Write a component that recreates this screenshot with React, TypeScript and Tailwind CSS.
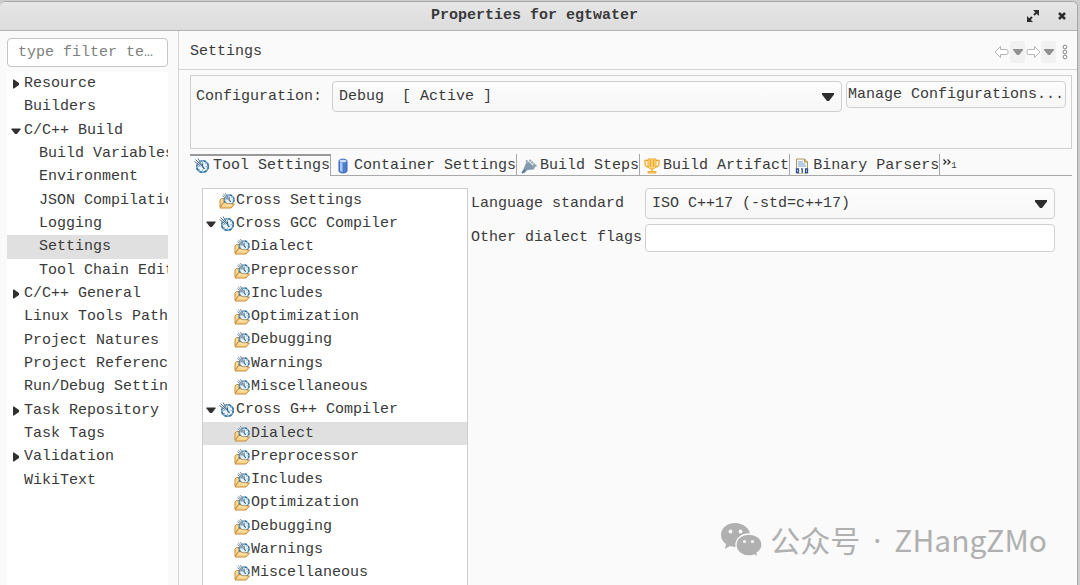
import type { ReactNode } from 'react';

type PageItem = {
  label: string;
  child?: boolean;
  arrow?: 'open' | 'closed';
  selected?: boolean;
};

type ToolItem = {
  label: string;
  kind: 'root' | 'tool' | 'option';
  selected?: boolean;
};

const pages: PageItem[] = [
  { label: 'Resource', arrow: 'closed' },
  { label: 'Builders' },
  { label: 'C/C++ Build', arrow: 'open' },
  { label: 'Build Variables', child: true },
  { label: 'Environment', child: true },
  { label: 'JSON Compilation', child: true },
  { label: 'Logging', child: true },
  { label: 'Settings', child: true, selected: true },
  { label: 'Tool Chain Editor', child: true },
  { label: 'C/C++ General', arrow: 'closed' },
  { label: 'Linux Tools Path' },
  { label: 'Project Natures' },
  { label: 'Project References' },
  { label: 'Run/Debug Settings' },
  { label: 'Task Repository', arrow: 'closed' },
  { label: 'Task Tags' },
  { label: 'Validation', arrow: 'closed' },
  { label: 'WikiText' },
];

const tools: ToolItem[] = [
  { label: 'Cross Settings', kind: 'root' },
  { label: 'Cross GCC Compiler', kind: 'tool' },
  { label: 'Dialect', kind: 'option' },
  { label: 'Preprocessor', kind: 'option' },
  { label: 'Includes', kind: 'option' },
  { label: 'Optimization', kind: 'option' },
  { label: 'Debugging', kind: 'option' },
  { label: 'Warnings', kind: 'option' },
  { label: 'Miscellaneous', kind: 'option' },
  { label: 'Cross G++ Compiler', kind: 'tool' },
  { label: 'Dialect', kind: 'option', selected: true },
  { label: 'Preprocessor', kind: 'option' },
  { label: 'Includes', kind: 'option' },
  { label: 'Optimization', kind: 'option' },
  { label: 'Debugging', kind: 'option' },
  { label: 'Warnings', kind: 'option' },
  { label: 'Miscellaneous', kind: 'option' },
];

function Triangle({ open }: { open: boolean }) {
  return (
    <svg className="h-[10px] w-[10px]" viewBox="0 0 10 10" fill="#303030">
      <path d={open ? 'M.5 2.5h9v1L6 8H4L.5 3.5z' : 'M2 .5h1L8 4v2L3 9.500H2z'} />
    </svg>
  );
}

function Gauge() {
  return (
    <g>
      <circle cx="8.500" cy="8.500" r="5.800" fill="#eef5fa" stroke="#6f9fc0" strokeWidth="1.600" />
      <circle cx="8.500" cy="8.500" r="5.800" fill="none" stroke="#35739f" strokeWidth="1.600" strokeDasharray="2.500 2.100" />
      <path d="M8.500 3.500v2M13.500 8.500h-2M8.500 13.500v-2M3.500 8.500h2M12 5l-1 1M5 12l1-1" stroke="#8db6d2" />
      <path d="M8.500 8.500l2 2.500M8.500 9V5.500" stroke="#2f6c98" strokeWidth="1.300" />
      <path d="M0 0h4l3 3-4 4-3-3z" fill="#fff" fillOpacity=".7" />
      <path d="M.5 3.500l6 4.500M1.500 1.500L8 8M4 .5l3.500 6" stroke="#526f86" />
    </g>
  );
}

function GaugeIcon() {
  return (
    <svg className="h-4 w-4 shrink-0" viewBox="0 0 16 16" fill="none">
      <Gauge />
    </svg>
  );
}

function FolderIcon() {
  return (
    <svg className="h-4 w-4 shrink-0" viewBox="0 0 16 16" fill="none">
      <path d="M1 14V7l1.500-1.500H5V9l-3.500 5z" fill="#f8dc94" stroke="#c78a3c" />
      <g transform="translate(3 -.3) scale(.84)">
        <Gauge />
      </g>
      <path d="M1 15l3-5h3.500l1 1h7L12 15z" fill="#fbd488" stroke="#c78a3c" strokeLinejoin="round" />
      <path d="M4.500 11h2.500l1 1h5" stroke="#fff0c4" />
    </svg>
  );
}

function ContainerIcon() {
  return (
    <svg className="h-4 w-4 shrink-0" viewBox="0 0 16 16">
      <path d="M4 3c0-2.500 8-2.500 8 0v10c0 2.500-8 2.500-8 0z" fill="#4d7fd0" stroke="#3563b4" />
      <path d="M5 4.500h2.500v9.500L5 13z" fill="#a9c8f4" />
      <ellipse cx="8" cy="3" rx="3.500" ry="1.300" fill="#cfe0fa" />
    </svg>
  );
}

function StepsIcon() {
  return (
    <svg className="h-4 w-4 shrink-0" viewBox="0 0 16 16" fill="none">
      <path d="M1 14.500L5.500 4 9 5l5 4.500-1.500 2-6 .5-3 3z" fill="#8499ab" />
      <path d="M5 2.500l4.500 4M8.500 2l5.500 5" stroke="#8ea4b5" strokeWidth="2" strokeDasharray="2 .7" />
      <path d="M11 8.500l4.500-1" stroke="#8ea4b5" strokeWidth="2" />
      <path d="M1 15l3-3" stroke="#5f7b93" strokeWidth="2" />
    </svg>
  );
}

function TrophyIcon() {
  return (
    <svg className="h-4 w-4 shrink-0" viewBox="0 0 16 16" fill="none">
      <path d="M4 2.500H1v3C1 8 3 9 5 9M12 2.500h3v3c0 2.500-2 3.500-4 3.500" stroke="#eea92c" strokeWidth="1.300" />
      <path d="M4 1h8v7c0 2-2 3-4 3S4 10 4 8z" fill="#fcd77c" stroke="#eea92c" />
      <path d="M6.500 2v7M9.500 2v7M8 11v2" stroke="#eea92c" strokeWidth="1.300" />
      <path d="M4 13.500h8v1.500H4z" fill="#fcd77c" stroke="#eea92c" />
    </svg>
  );
}

function BinaryIcon() {
  return (
    <svg className="h-4 w-4 shrink-0" viewBox="0 0 16 16" fill="none">
      <path d="M2.500 15V1h8l3 3v11z" fill="#f2f6fc" stroke="#a99762" />
      <path d="M10.500 1v3h3" fill="#e7c987" stroke="#b88b3c" />
      <path d="M4 4h5M4 6h7M4 8h8" stroke="#7fa3d3" />
      <path d="M3 9.500h10V15H3z" fill="#fff" />
      <path d="M2.500 11h2v3.500h-2zM11.500 11h2v3.500h-2z" stroke="#2f4f8c" strokeWidth="1.300" />
      <path d="M7 10.800h1.200V15" stroke="#2f4f8c" strokeWidth="1.300" />
    </svg>
  );
}

function HistoryArrow({ flip }: { flip?: boolean }) {
  return (
    <svg className={flip ? 'h-4 w-4 rotate-180' : 'h-4 w-4'} viewBox="0 0 16 16" fill="#fff">
      <path d="M1 8l5.500-5.500v3h6q1.500 0 1.500 1.500v2q0 1.500-1.500 1.500h-6v3z" stroke="#b4b4b4" strokeLinejoin="round" />
    </svg>
  );
}

function SmallDrop() {
  return (
    <svg className="h-[6px] w-[10px]" viewBox="0 0 10 6" fill="#909090">
      <path d="M0 0h10v1L6 6H4L0 1z" />
    </svg>
  );
}

function Combo({ id, value }: { id: string; value: string }) {
  return (
    <div className="relative min-w-0 flex-1">
      <select
        id={id}
        className="h-[31px] w-full appearance-none rounded-[4px] border border-[#cfcfcf] bg-linear-to-b from-[#fcfcfc] to-[#f7f7f7] px-[6px]"
      >
        <option>{value}</option>
      </select>
      <svg className="pointer-events-none absolute top-3 right-2 h-2 w-3" viewBox="0 0 12 8" fill="#2d2d2d">
        <path d="M0 0h12v1.500L7 8H5L0 1.500z" />
      </svg>
    </div>
  );
}

function Tab({ icon, label, active }: { icon: ReactNode; label: string; active?: boolean }) {
  return (
    <button
      role="tab"
      aria-selected={!!active}
      className={`flex h-[22px] shrink-0 items-center gap-[3px] border-r border-[#a8a8a8] pl-1 whitespace-nowrap ${
        active ? 'border-t-2 border-t-[#999]' : 'border-b pt-[2px]'
      }`}
    >
      {icon}
      {label}
    </button>
  );
}

function Sidebar() {
  return (
    <aside className="flex w-[179px] shrink-0 flex-col border-r border-[#d4d4d4] pt-[7px] pr-[10px] pl-[7px]">
      <input
        aria-label="Filter"
        placeholder="type filter te…"
        className="h-[29px] w-full rounded-[4px] border border-[#c4c4c4] bg-white px-[10px] placeholder:text-[#808080]"
      />
      <div className="mt-[5px] flex-1 bg-white">
        <ul className="grid h-[420px] auto-rows-fr grid-cols-1">
          {pages.map((page) => (
            <li key={page.label} className={page.selected ? 'flex bg-[#e0e0e0]' : 'flex'}>
              <button className="flex w-full items-center overflow-hidden pt-px whitespace-nowrap">
                <span className={page.child ? 'w-8 shrink-0' : 'flex w-[17px] shrink-0 justify-center'}>
                  {page.arrow && <Triangle open={page.arrow === 'open'} />}
                </span>
                {page.label}
              </button>
            </li>
          ))}
        </ul>
      </div>
    </aside>
  );
}

function ToolTree() {
  return (
    <ul className="grid h-[397px] w-[266px] shrink-0 auto-rows-fr grid-cols-1 border-x border-t border-[#cdcdcd] bg-white">
      {tools.map((tool, i) => (
        <li key={i} className={tool.selected ? 'flex bg-[#e0e0e0]' : 'flex'}>
          <button className="flex w-full items-center whitespace-nowrap">
            <span className={tool.kind === 'option' ? 'w-[31px]' : 'flex w-4 justify-center'}>
              {tool.kind === 'tool' && <Triangle open />}
            </span>
            {tool.kind === 'tool' ? <GaugeIcon /> : <FolderIcon />}
            <span className="pl-px">{tool.label}</span>
          </button>
        </li>
      ))}
    </ul>
  );
}

function Watermark() {
  return (
    <div className="pointer-events-none absolute right-[30px] bottom-[22px] flex items-center gap-2 font-['Noto_Sans_CJK_SC',sans-serif] text-[30px] leading-[44px] text-[#b0b0b0]">
      <svg className="h-9 w-[42px]" viewBox="0 0 42 36">
        <path d="M15 1C7 1 1 6 1 13c0 4 2 7 5 9l-1 5 5-3q3 1 7 1c8 0 13-5 13-12S23 1 15 1z" fill="#b0b0b0" />
        <path
          d="M29 12c-7 0-13 4.500-13 11s6 11 13 11q3 0 5-1l4 2-1-4c3-2 5-5 5-8 0-6.500-6-11-13-11z"
          fill="#b0b0b0"
          stroke="#fafafa"
          strokeWidth="1.300"
        />
        <g fill="#fafafa">
          <circle cx="10.500" cy="9.500" r="1.900" />
          <circle cx="20.500" cy="9.500" r="1.900" />
          <circle cx="24.500" cy="19.500" r="1.600" />
          <circle cx="32.500" cy="19.500" r="1.600" />
        </g>
      </svg>
      <p className="flex items-baseline gap-[13px]">
        <span>公众号</span>
        <span className="font-['Noto_Sans',sans-serif]">·</span>
        <span>ZHangZMo</span>
      </p>
    </div>
  );
}

export default function App() {
  return (
    <div className="h-screen overflow-hidden bg-[#cdcdcd] pt-px pr-[2px] font-['Liberation_Mono',monospace] text-[15px] leading-5 text-[#3a3a3a]">
      <div className="relative flex h-full flex-col overflow-hidden rounded-t-[6px] border-t border-r border-[#a6a6a6] bg-[#fafafa]">
        <header className="flex h-[29px] shrink-0 items-center border-b border-[#b4b4b4] bg-linear-to-b from-[#e6e6e6] to-[#dcdcdc] pr-[11px]">
          <h1 className="flex-1 pl-[42px] text-center font-bold">Properties for egtwater</h1>
          <button aria-label="Maximize">
            <svg className="h-3 w-3" viewBox="0 0 12 12" fill="#2d2d2d" stroke="#2d2d2d" strokeWidth="2">
              <path d="M6 0h6v6zM0 6v6h6z" stroke="none" />
              <path d="M7 5l3-3M5 7l-3 3" />
            </svg>
          </button>
          <button aria-label="Close" className="ml-[19px]">
            <svg className="h-2 w-2" viewBox="0 0 8 8" stroke="#2d2d2d" strokeWidth="2.500">
              <path d="M1 1l6 6M7 1L1 7" />
            </svg>
          </button>
        </header>

        <div className="flex min-h-0 flex-1">
          <Sidebar />
          <main className="min-w-0 flex-1">
            <div className="flex h-[39px] items-center border-b border-[#d4d4d4] pt-[3px] pr-[9px] pl-[11px]">
              <h2 className="flex-1">Settings</h2>
              <button aria-label="Back">
                <HistoryArrow />
              </button>
              <button aria-label="Back menu" className="flex h-[22px] w-[15px] items-center justify-center rounded-[3px] bg-[#f1f1f1]">
                <SmallDrop />
              </button>
              <button aria-label="Forward">
                <HistoryArrow flip />
              </button>
              <button aria-label="Forward menu" className="flex h-[22px] w-[15px] items-center justify-center rounded-[3px] bg-[#f1f1f1]">
                <SmallDrop />
              </button>
              <button aria-label="View menu" className="ml-[6px]">
                <svg className="h-4 w-[6px]" viewBox="0 0 6 16" fill="none" stroke="#8a8a8a">
                  <circle cx="3" cy="3" r="1.900" />
                  <circle cx="3" cy="8" r="1.900" />
                  <circle cx="3" cy="13" r="1.900" />
                </svg>
              </button>
            </div>

            <div className="pt-[5px] pr-[5px] pl-[11px]">
              <section className="flex h-[74px] items-start border border-[#d0d0d0] pt-[5px] pr-[5px] pl-[5px]">
                <label htmlFor="configuration" className="w-[136px] shrink-0 pt-[6px]">
                  Configuration:
                </label>
                <Combo id="configuration" value={'Debug\u00a0 [ Active ]'} />
                <button className="ml-1 h-[27px] w-[220px] shrink-0 rounded-[4px] border border-[#d0d0d0] bg-linear-to-b from-[#fcfcfc] to-[#f7f7f7] whitespace-nowrap">
                  Manage Configurations...
                </button>
              </section>

              <div role="tablist" className="mt-[5px] flex">
                <Tab icon={<GaugeIcon />} label="Tool Settings" active />
                <Tab icon={<ContainerIcon />} label="Container Settings" />
                <Tab icon={<StepsIcon />} label="Build Steps" />
                <Tab icon={<TrophyIcon />} label="Build Artifact" />
                <Tab icon={<BinaryIcon />} label="Binary Parsers" />
                <button aria-label="More tabs" className="flex flex-1 border-b border-[#a8a8a8] pl-[3px]">
                  <svg className="mt-[5px] h-[6px] w-2" viewBox="0 0 8 6" fill="none" stroke="#2d2d2d" strokeWidth="1.300">
                    <path d="M.5.500L3 3 .5 5.500M4.500.500L7 3 4.500 5.500" />
                  </svg>
                  <span className="pt-[6px] text-[9px] leading-3">1</span>
                </button>
              </div>

              <div className="flex items-start pt-3 pr-[17px] pl-3">
                <ToolTree />
                <div className="flex min-w-0 flex-1 flex-col gap-[5px] pl-[3px]">
                  <div className="flex items-center">
                    <label htmlFor="standard" className="w-[174px] shrink-0">
                      Language standard
                    </label>
                    <Combo id="standard" value="ISO C++17 (-std=c++17)" />
                  </div>
                  <div className="flex items-center">
                    <label htmlFor="flags" className="w-[174px] shrink-0 whitespace-nowrap">
                      Other dialect flags
                    </label>
                    <input
                      id="flags"
                      className="h-7 min-w-0 flex-1 rounded-[4px] border border-[#d0d0d0] bg-white px-[6px]"
                    />
                  </div>
                </div>
              </div>
            </div>
          </main>
        </div>
        <Watermark />
      </div>
    </div>
  );
}
